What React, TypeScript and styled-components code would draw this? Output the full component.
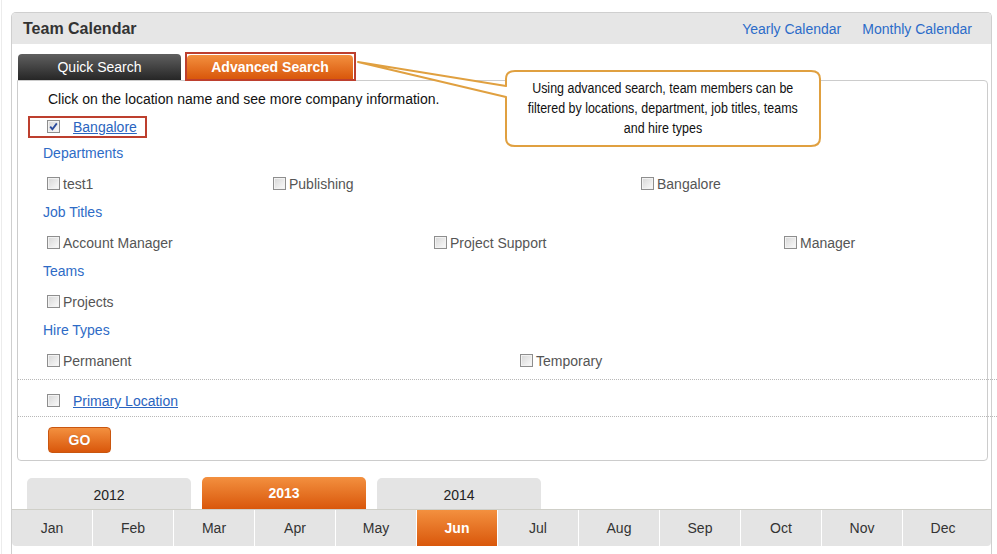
import styled, { createGlobalStyle } from "styled-components";

const GlobalStyle = createGlobalStyle`
  body {
    margin: 0;
    background: #fff;
    font-family: "Liberation Sans", Arial, sans-serif;
    font-size: 14px;
    color: #222;
  }
`;

const Page = styled.div`
  position: relative;
  width: 997px;
  height: 554px;
  overflow: hidden;
  &::before {
    content: "";
    position: absolute;
    left: 1px;
    top: 0;
    bottom: 0;
    width: 1px;
    background: #ececec;
  }
`;

const Panel = styled.div`
  margin: 12px 5px 0 11px;
  height: 560px;
  border: 1px solid #cfcfcf;
  border-bottom: none;
  border-radius: 5px 5px 0 0;
  display: flex;
  flex-direction: column;
`;

const Header = styled.div`
  height: 31px;
  background: #e6e6e6;
  border-radius: 4px 4px 0 0;
  display: flex;
  align-items: center;
  justify-content: space-between;
  padding: 0 19px 0 11px;
`;

const Title = styled.h1`
  margin: 0;
  font-size: 16px;
  font-weight: bold;
  color: #333;
`;

const HeaderLinks = styled.div`
  display: flex;
  gap: 21px;
`;

const NavLink = styled.a`
  color: #2c6cc9;
  font-size: 14px;
  text-decoration: none;
`;

const TabRow = styled.div`
  display: flex;
  align-items: flex-end;
  gap: 4px;
  padding: 8px 0 0 6px;
  position: relative;
  z-index: 1;
`;

const Tab = styled.div<{ $active?: boolean }>`
  width: ${(p) => (p.$active ? 166 : 163)}px;
  height: ${(p) => (p.$active ? 24 : 26)}px;
  border-radius: 4px 4px 0 0;
  display: flex;
  align-items: center;
  justify-content: center;
  color: #fff;
  font-size: 14px;
  font-weight: ${(p) => (p.$active ? "bold" : "normal")};
  background: ${(p) =>
    p.$active
      ? "linear-gradient(#f3903f, #d9570b)"
      : "linear-gradient(#606060, #262626)"};
`;

const TabHighlight = styled.div`
  border: 2px solid #bd3f2e;
  padding: 1px 1px 0 0;
  margin-bottom: -1px;
  background: #fff;
`;

const SearchBox = styled.div`
  margin: 0 3px 0 5px;
  border: 1px solid #cccccc;
  border-radius: 0 4px 4px 4px;
  padding-top: 8px;
`;

const Intro = styled.p`
  margin: 0;
  padding-left: 30px;
  line-height: 20px;
  color: #111;
`;

const LocationHighlight = styled.div`
  margin: 7px 0 0 10px;
  height: 22px;
  box-sizing: border-box;
  border: 2px solid #bd3f2e;
  display: inline-flex;
  align-items: center;
  gap: 13px;
  padding: 0 8px 0 17px;
`;

const UnderLink = styled.a`
  color: #2a64c0;
  text-decoration: underline;
  font-size: 14px;
`;

const Heading = styled.div<{ $first?: boolean }>`
  margin-top: ${(p) => (p.$first ? 5 : 0)}px;
  padding-left: 25px;
  line-height: 20px;
  color: #2e6bc6;
`;

const ItemRow = styled.div<{ $cols: string }>`
  display: grid;
  grid-template-columns: ${(p) => p.$cols};
  padding: 11px 0 8px 29px;
`;

const Item = styled.label`
  display: flex;
  align-items: center;
  gap: 3px;
  line-height: 20px;
  color: #555;
`;

const Box = styled.span`
  width: 13px;
  height: 13px;
  box-sizing: border-box;
  border: 1px solid #8e8e8e;
  background: linear-gradient(135deg, #d6d6d6, #fbfbfb);
  box-shadow: inset 0 0 0 1px #f2f2f2;
  display: inline-flex;
  align-items: center;
  justify-content: center;
  flex: none;
  margin-top: -1px;
`;

const Dotted = styled.div`
  border-top: 1px dotted #b8b8b8;
  margin-right: -10px;
`;

const PrimaryRow = styled.div`
  height: 36px;
  box-sizing: border-box;
  padding: 6px 0 0 29px;
  display: flex;
  align-items: center;
  gap: 13px;
`;

const GoButton = styled.button`
  margin: 10px 0 7px 30px;
  width: 63px;
  height: 26px;
  border: 1px solid #c9560f;
  border-radius: 4px;
  background: linear-gradient(#f3903f, #d9570b);
  color: #fff;
  font-family: "Liberation Sans", Arial, sans-serif;
  font-weight: bold;
  font-size: 14px;
  text-shadow: 0 0 1px rgba(120, 50, 0, 0.4);
  display: block;
`;

const YearRow = styled.div`
  display: flex;
  align-items: flex-end;
  gap: 11px;
  padding-left: 15px;
  margin-top: 16px;
`;

const YearTab = styled.div<{ $active?: boolean }>`
  width: 164px;
  height: ${(p) => (p.$active ? 32 : 31)}px;
  box-sizing: border-box;
  border-radius: 5px 5px 0 0;
  display: flex;
  align-items: center;
  justify-content: center;
  padding-top: ${(p) => (p.$active ? 0 : 3)}px;
  font-size: 14px;
  color: ${(p) => (p.$active ? "#fff" : "#222")};
  font-weight: ${(p) => (p.$active ? "bold" : "normal")};
  background: ${(p) =>
    p.$active ? "linear-gradient(#f3903f, #d9570b)" : "#e4e4e4"};
`;

const MonthBar = styled.div`
  display: flex;
  height: 36px;
  border-top: 1px solid #cfcfc8;
  border-radius: 0 0 4px 4px;
  overflow: hidden;
  background: #e4e4e4;
`;

const Month = styled.div<{ $active?: boolean }>`
  width: 80px;
  flex: none;
  display: flex;
  align-items: center;
  justify-content: center;
  font-size: 14px;
  color: ${(p) => (p.$active ? "#fff" : "#333")};
  font-weight: ${(p) => (p.$active ? "bold" : "normal")};
  background: ${(p) =>
    p.$active ? "linear-gradient(#f3903f, #d9570b)" : "transparent"};
  & + & {
    border-left: 1px solid #fff;
  }
  &:last-child {
    flex: 1;
    padding-right: 8px;
  }
`;

const Callout = styled.div`
  position: absolute;
  left: 355px;
  top: 58px;
  width: 470px;
  height: 92px;
  z-index: 2;
`;

const CalloutText = styled.div`
  position: absolute;
  left: 152px;
  top: 20px;
  width: 311px;
  display: flex;
  flex-direction: column;
  align-items: center;
  font-family: "Liberation Sans", Arial, sans-serif;
  font-size: 14px;
  line-height: 20px;
  color: #111;
  white-space: nowrap;
`;

const CalloutLine = styled.span`
  display: block;
  transform: scaleX(0.89);
  transform-origin: center;
`;

const Check = () => (
  <svg width="11" height="11" viewBox="0 0 11 11">
    <path d="M2.2 5.6 L4.4 8.2 L8.8 2.4" fill="none" stroke="#2b4b9c" strokeWidth="1.8" />
  </svg>
);

type Group = { title: string; cols: string; items: string[] };

const groups: Group[] = [
  { title: "Departments", cols: "226px 368px 1fr", items: ["test1", "Publishing", "Bangalore"] },
  { title: "Job Titles", cols: "387px 350px 1fr", items: ["Account Manager", "Project Support", "Manager"] },
  { title: "Teams", cols: "1fr", items: ["Projects"] },
  { title: "Hire Types", cols: "473px 1fr", items: ["Permanent", "Temporary"] },
];

const months = ["Jan", "Feb", "Mar", "Apr", "May", "Jun", "Jul", "Aug", "Sep", "Oct", "Nov", "Dec"];

const calloutLines = [
  "Using advanced search, team members can be",
  "filtered by locations, department, job titles, teams",
  "and hire types",
];

export default function App() {
  return (
    <Page>
      <GlobalStyle />
      <Panel>
        <Header>
          <Title>Team Calendar</Title>
          <HeaderLinks>
            <NavLink href="#">Yearly Calendar</NavLink>
            <NavLink href="#">Monthly Calendar</NavLink>
          </HeaderLinks>
        </Header>

        <TabRow>
          <Tab>Quick Search</Tab>
          <TabHighlight>
            <Tab $active>Advanced Search</Tab>
          </TabHighlight>
        </TabRow>

        <SearchBox>
          <Intro>Click on the location name and see more company information.</Intro>
          <LocationHighlight>
            <Box>
              <Check />
            </Box>
            <UnderLink href="#">Bangalore</UnderLink>
          </LocationHighlight>

          {groups.map((g, i) => (
            <div key={g.title}>
              <Heading $first={i === 0}>{g.title}</Heading>
              <ItemRow $cols={g.cols}>
                {g.items.map((it) => (
                  <Item key={it}>
                    <Box />
                    {it}
                  </Item>
                ))}
              </ItemRow>
            </div>
          ))}

          <Dotted />
          <PrimaryRow>
            <Box />
            <UnderLink href="#">Primary Location</UnderLink>
          </PrimaryRow>
          <Dotted />
          <GoButton>GO</GoButton>
        </SearchBox>

        <YearRow>
          <YearTab>2012</YearTab>
          <YearTab $active>2013</YearTab>
          <YearTab>2014</YearTab>
        </YearRow>
        <MonthBar>
          {months.map((m) => (
            <Month key={m} $active={m === "Jun"}>
              {m}
            </Month>
          ))}
        </MonthBar>
      </Panel>

      <Callout>
        <svg width="470" height="92" viewBox="0 0 470 92">
          <path
            d="M3 4 L151 28 L151 21 Q151 13 160 13 L456 13 Q465 13 465 21 L465 80 Q465 88 456 88 L160 88 Q151 88 151 80 L151 39 Z"
            fill="#fff"
            stroke="#e0a040"
            strokeWidth="2"
            strokeLinejoin="round"
          />
        </svg>
        <CalloutText>
          {calloutLines.map((l) => (
            <CalloutLine key={l}>{l}</CalloutLine>
          ))}
        </CalloutText>
      </Callout>
    </Page>
  );
}
